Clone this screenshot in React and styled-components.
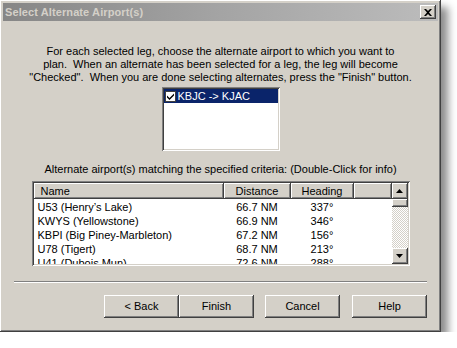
import React from 'react';
import styled, { createGlobalStyle } from 'styled-components';

const face = '#d4d0c8';

const raised = `
  box-shadow: inset -1px -1px #404040, inset 1px 1px #ffffff,
    inset -2px -2px #808080, inset 2px 2px ${face};
`;

const sunken = `
  box-shadow: inset 1px 1px #808080, inset -1px -1px #ffffff,
    inset 2px 2px #404040, inset -2px -2px ${face};
`;

const GlobalStyle = createGlobalStyle`
  html, body {
    margin: 0;
    padding: 0;
    background: #ffffff;
  }
  body {
    font-family: "Liberation Sans", Arial, sans-serif;
    font-size: 11px;
    color: #000;
  }
`;

const Window = styled.div`
  width: 441px;
  height: 332px;
  box-sizing: border-box;
  padding: 3px;
  background: ${face};
  box-shadow: inset -1px -1px #404040, inset 1px 1px #ffffff,
    inset -2px -2px #808080, inset 2px 2px ${face},
    7px 7px 8px rgba(0, 0, 0, 0.45);
  display: flex;
  flex-direction: column;
`;

const TitleBar = styled.div`
  height: 18px;
  display: flex;
  align-items: center;
  justify-content: space-between;
  padding: 0 2px 0 2px;
  background: linear-gradient(90deg, #868686 0%, #a4a4a4 50%, #bcbcbc 100%);
`;

const Title = styled.span`
  color: ${face};
  font-weight: bold;
  font-size: 11px;
  letter-spacing: 0.1px;
`;

const CloseButton = styled.div`
  width: 16px;
  height: 14px;
  background: ${face};
  ${raised}
  display: flex;
  align-items: center;
  justify-content: center;
`;

const Body = styled.div`
  flex: 1;
  display: flex;
  flex-direction: column;
  align-items: center;
  padding: 24px 11px 0;
`;

const Intro = styled.p`
  margin: 0;
  text-align: center;
  line-height: 13px;
`;

const LegBox = styled.div`
  width: 118px;
  height: 64px;
  box-sizing: border-box;
  margin-top: 3px;
  padding: 2px;
  background: #fff;
  ${sunken}
`;

const LegRow = styled.div`
  height: 14px;
  display: flex;
  align-items: center;
  gap: 2px;
  padding-left: 1px;
  background: ${(p) => (p.$selected ? '#0a246a' : 'transparent')};
  color: ${(p) => (p.$selected ? '#fff' : '#000')};
`;

const Check = styled.span`
  width: 11px;
  height: 11px;
  box-sizing: border-box;
  background: #fff;
  border: 1px solid #404040;
  display: flex;
  align-items: center;
  justify-content: center;
`;

const Label = styled.div`
  margin-top: 12px;
  line-height: 13px;
`;

const ListView = styled.div`
  width: 378px;
  height: 85px;
  box-sizing: border-box;
  margin-top: 5px;
  padding: 2px;
  background: #fff;
  ${sunken}
  display: flex;
  overflow: hidden;
`;

const ListMain = styled.div`
  flex: 1;
  overflow: hidden;
`;

const Columns = styled.div`
  display: grid;
  grid-template-columns: 190px 67px 63px 1fr;
`;

const HeaderCell = styled.div`
  height: 16px;
  line-height: 16px;
  background: ${face};
  ${raised}
  text-align: ${(p) => (p.$left ? 'left' : 'center')};
  padding-left: ${(p) => (p.$left ? '7px' : '0')};
`;

const Rows = styled.div`
  padding-top: 1px;
`;

const Cell = styled.div`
  height: 14px;
  line-height: 14px;
  white-space: nowrap;
  text-align: ${(p) => (p.$left ? 'left' : 'center')};
  padding-left: ${(p) => (p.$left ? '4px' : '0')};
`;

const ScrollBar = styled.div`
  width: 16px;
  display: flex;
  flex-direction: column;
  background: repeating-conic-gradient(${face} 0 25%, #ffffff 0 50%) 0 0 / 2px 2px;
`;

const ScrollButton = styled.div`
  width: 16px;
  height: 16px;
  box-sizing: border-box;
  background: ${face};
  ${raised}
  display: flex;
  align-items: center;
  justify-content: center;
`;

const Thumb = styled.div`
  height: 8px;
  background: ${face};
  ${raised}
`;

const Track = styled.div`
  flex: 1;
`;

const Separator = styled.div`
  width: 413px;
  height: 2px;
  margin-top: 15px;
  border-top: 1px solid #808080;
  border-bottom: 1px solid #ffffff;
  box-sizing: border-box;
`;

const ButtonRow = styled.div`
  align-self: stretch;
  display: flex;
  justify-content: flex-end;
  margin-top: 12px;
`;

const Button = styled.div`
  width: 75px;
  height: 23px;
  line-height: 23px;
  text-align: center;
  background: ${face};
  ${raised}
  margin-left: ${(p) => p.$gap || 0}px;
`;

const airports = [
  ['U53 (Henry\u2019s Lake)', '66.7 NM', '337\u00b0'],
  ['KWYS (Yellowstone)', '66.9 NM', '346\u00b0'],
  ['KBPI (Big Piney-Marbleton)', '67.2 NM', '156\u00b0'],
  ['U78 (Tigert)', '68.7 NM', '213\u00b0'],
  ['U41 (Dubois Mun)', '72.6 NM', '288\u00b0'],
];

function Arrow({ down }) {
  return (
    <svg width="7" height="4" viewBox="0 0 7 4">
      <path d={down ? 'M0 0h7L3.5 4z' : 'M3.5 0L7 4H0z'} fill="#000" />
    </svg>
  );
}

function App() {
  return (
    <>
      <GlobalStyle />
      <Window>
        <TitleBar>
          <Title>Select Alternate Airport(s)</Title>
          <CloseButton>
            <svg width="8" height="7" viewBox="0 0 8 7">
              <path d="M0 0h2l2 2 2-2h2L5 3.5 8 7H6L4 5 2 7H0l3-3.5z" fill="#000" />
            </svg>
          </CloseButton>
        </TitleBar>
        <Body>
          <Intro>
            For each selected leg, choose the alternate airport to which you want to
            <br />
            plan.&nbsp; When an alternate has been selected for a leg, the leg will become
            <br />
            "Checked".&nbsp; When you are done selecting alternates, press the "Finish" button.
          </Intro>
          <LegBox>
            <LegRow $selected>
              <Check>
                <svg width="7" height="7" viewBox="0 0 7 7">
                  <path d="M0 2.5l2.5 2.5L7 0.5v2L2.5 7 0 4.5z" fill="#000" />
                </svg>
              </Check>
              KBJC -&gt; KJAC
            </LegRow>
          </LegBox>
          <Label>Alternate airport(s) matching the specified criteria: (Double-Click for info)</Label>
          <ListView>
            <ListMain>
              <Columns>
                <HeaderCell $left>Name</HeaderCell>
                <HeaderCell>Distance</HeaderCell>
                <HeaderCell>Heading</HeaderCell>
                <HeaderCell />
              </Columns>
              <Rows>
                {airports.map(([name, dist, hdg]) => (
                  <Columns key={name}>
                    <Cell $left>{name}</Cell>
                    <Cell>{dist}</Cell>
                    <Cell>{hdg}</Cell>
                    <Cell />
                  </Columns>
                ))}
              </Rows>
            </ListMain>
            <ScrollBar>
              <ScrollButton>
                <Arrow />
              </ScrollButton>
              <Thumb />
              <Track />
              <ScrollButton>
                <Arrow down />
              </ScrollButton>
            </ScrollBar>
          </ListView>
          <Separator />
          <ButtonRow>
            <Button>&lt; Back</Button>
            <Button>Finish</Button>
            <Button $gap={11}>Cancel</Button>
            <Button $gap={12}>Help</Button>
          </ButtonRow>
        </Body>
      </Window>
    </>
  );
}

export default App;
